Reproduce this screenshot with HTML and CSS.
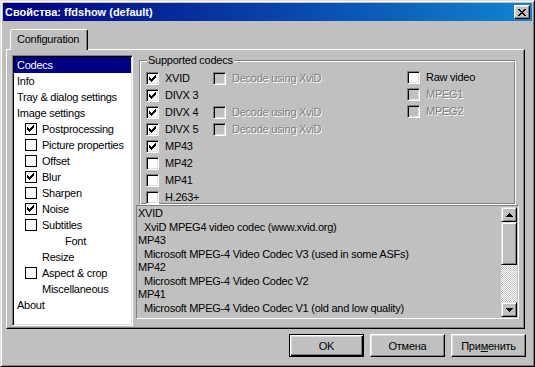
FILE: index.html
```html
<!DOCTYPE html>
<html lang="ru">
<head>
    <meta charset="UTF-8">
    <title>Свойства: ffdshow (default)</title>
    <link rel="stylesheet" href="styles.css">
</head>
<body>
    <svg class="sprites" xmlns="http://www.w3.org/2000/svg">
        <symbol id="tick" viewBox="0 0 11 11">
            <path d="M8 2h1v1h-1z M7 3h2v1h-2z M2 4h1v1h-1z M6 4h3v1h-3z M2 5h2v1h-2z M5 5h3v1h-3z M2 6h5v1h-5z M3 7h3v1h-3z M4 8h1v1h-1z" fill="#000"/>
        </symbol>
    </svg>

    <div class="window">
        <div class="titlebar">
            <span class="title">Свойства: ffdshow (default)</span>
            <button class="close">
                <svg width="8" height="7" viewBox="0 0 8 7"><path d="M0 0h2v1h-2z M6 0h2v1h-2z M1 1h2v1h-2z M5 1h2v1h-2z M2 2h4v1h-4z M3 3h2v1h-2z M2 4h4v1h-4z M1 5h2v1h-2z M5 5h2v1h-2z M0 6h2v1h-2z M6 6h2v1h-2z" fill="#000"/></svg>
            </button>
        </div>

        <div class="tabs">
            <div class="tab">Configuration</div>
        </div>

        <div class="panel">
            <ul class="tree">
                <li class="item sel">Codecs</li>
                <li class="item">Info</li>
                <li class="item">Tray &amp; dialog settings</li>
                <li class="item">Image settings</li>
                <li class="item sub"><span class="box"><svg class="tick"><use href="#tick"/></svg></span>Postprocessing</li>
                <li class="item sub"><span class="box"></span>Picture properties</li>
                <li class="item sub"><span class="box"></span>Offset</li>
                <li class="item sub"><span class="box"><svg class="tick"><use href="#tick"/></svg></span>Blur</li>
                <li class="item sub"><span class="box"></span>Sharpen</li>
                <li class="item sub"><span class="box"><svg class="tick"><use href="#tick"/></svg></span>Noise</li>
                <li class="item sub"><span class="box"></span>Subtitles</li>
                <li class="item leaf2">Font</li>
                <li class="item leaf">Resize</li>
                <li class="item sub"><span class="box"></span>Aspect &amp; crop</li>
                <li class="item leaf">Miscellaneous</li>
                <li class="item">About</li>
            </ul>

            <div class="main">
                <div class="group">
                    <span class="group-title">Supported codecs</span>
                    <div class="col col1">
                        <div class="check"><span class="cb"><svg class="tick"><use href="#tick"/></svg></span>XVID</div>
                        <div class="check"><span class="cb"><svg class="tick"><use href="#tick"/></svg></span>DIVX 3</div>
                        <div class="check"><span class="cb"><svg class="tick"><use href="#tick"/></svg></span>DIVX 4</div>
                        <div class="check"><span class="cb"><svg class="tick"><use href="#tick"/></svg></span>DIVX 5</div>
                        <div class="check"><span class="cb"><svg class="tick"><use href="#tick"/></svg></span>MP43</div>
                        <div class="check"><span class="cb"></span>MP42</div>
                        <div class="check"><span class="cb"></span>MP41</div>
                        <div class="check"><span class="cb"></span>H.263+</div>
                    </div>
                    <div class="col col2">
                        <div class="check"><span class="cb dis"></span><span class="label-dis clip">Decode using XviD</span></div>
                        <div class="check"></div>
                        <div class="check"><span class="cb dis"></span><span class="label-dis clip">Decode using XviD</span></div>
                        <div class="check"><span class="cb dis"></span><span class="label-dis clip">Decode using XviD</span></div>
                    </div>
                    <div class="col col3">
                        <div class="check"><span class="cb"></span>Raw video</div>
                        <div class="check"><span class="cb dis"></span><span class="label-dis">MPEG1</span></div>
                        <div class="check"><span class="cb dis"></span><span class="label-dis">MPEG2</span></div>
                    </div>
                </div>

                <div class="memo">
                    <div class="memo-text">
                        <div>XVID</div>
                        <div class="ind">XviD MPEG4 video codec (www.xvid.org)</div>
                        <div>MP43</div>
                        <div class="ind">Microsoft MPEG-4 Video Codec V3 (used in some ASFs)</div>
                        <div>MP42</div>
                        <div class="ind">Microsoft MPEG-4 Video Codec V2</div>
                        <div>MP41</div>
                        <div class="ind">Microsoft MPEG-4 Video Codec V1 (old and low quality)</div>
                    </div>
                    <div class="scroll">
                        <div class="sb-btn">
                            <svg width="7" height="4" viewBox="0 0 7 4"><path d="M3 0h1v1h-1z M2 1h3v1h-3z M1 2h5v1h-5z M0 3h7v1h-7z" fill="#000"/></svg>
                        </div>
                        <div class="sb-thumb"></div>
                        <div class="sb-track"></div>
                        <div class="sb-btn">
                            <svg width="7" height="4" viewBox="0 0 7 4"><path d="M0 0h7v1h-7z M1 1h5v1h-5z M2 2h3v1h-3z M3 3h1v1h-1z" fill="#000"/></svg>
                        </div>
                    </div>
                </div>
            </div>
        </div>

        <div class="buttons">
            <button class="btn default">OK</button>
            <button class="btn">Отмена</button>
            <button class="btn">При<u>м</u>енить</button>
        </div>
    </div>
</body>
</html>
```

FILE: styles.css
```css
* {
    box-sizing: border-box;
}
body {
    margin: 0;
    font-family: "Liberation Sans", Arial, sans-serif;
    font-size: 11px;
    letter-spacing: -0.25px;
    color: #000;
    background: #c0c0c0;
}
.sprites {
    display: none;
}
.window {
    width: 535px;
    height: 367px;
    background: #c0c0c0;
    border: 1px solid;
    border-color: #dfdfdf #000 #000 #dfdfdf;
    box-shadow: inset 1px 1px #fff, inset -1px -1px #808080;
    padding: 2px;
}
.titlebar {
    height: 18px;
    background: linear-gradient(90deg, #000080, #1084d0);
    display: flex;
    align-items: center;
    justify-content: space-between;
    padding: 0 2px;
}
.title {
    color: #fff;
    font-weight: bold;
    letter-spacing: 0;
}
.close {
    width: 16px;
    height: 14px;
    padding: 0;
    background: #c0c0c0;
    border: 1px solid;
    border-color: #fff #000 #000 #fff;
    box-shadow: inset -1px -1px #808080, inset 1px 1px #dfdfdf;
    display: flex;
    align-items: center;
    justify-content: center;
}
.close svg {
    display: block;
}

/* tab strip */
.tabs {
    display: flex;
    margin: 8px 0 0 7px;
    position: relative;
    z-index: 1;
}
.tab {
    width: 78px;
    height: 21px;
    margin-bottom: -1px;
    padding-left: 6px;
    line-height: 19px;
    background: #c0c0c0;
    border: 1px solid;
    border-bottom: none;
    border-color: #fff #000 transparent #fff;
    border-radius: 2px 2px 0 0;
    box-shadow: inset -1px 0 #808080;
}
.panel {
    display: flex;
    gap: 3px;
    width: 519px;
    height: 280px;
    margin-left: 3px;
    padding: 5px 5px 2px 5px;
    border: 1px solid;
    border-color: #fff #000 #000 #fff;
    box-shadow: inset -1px -1px #808080;
}

/* left tree */
.tree {
    list-style: none;
    margin: 0;
    padding: 1px;
    width: 121px;
    height: 271px;
    flex: none;
    background: #fff;
    border: 1px solid;
    border-color: #808080 #fff #fff #808080;
    box-shadow: inset 1px 1px #000, inset -1px -1px #dfdfdf;
}
.item {
    height: 16px;
    line-height: 16px;
    padding-left: 3px;
    display: flex;
    align-items: center;
    white-space: nowrap;
}
.item.sel {
    background: #000080;
    color: #fff;
}
.item.sub {
    padding-left: 11px;
}
.item.leaf {
    padding-left: 28px;
}
.item.leaf2 {
    padding-left: 51px;
}
.box {
    width: 12px;
    height: 12px;
    flex: none;
    margin-right: 5px;
    border: 1px solid #000;
    background: #fff;
}
.box .tick {
    display: block;
    width: 11px;
    height: 11px;
    margin: -1px 0 0 -1px;
}

/* right side */
.main {
    width: 383px;
    display: flex;
    flex-direction: column;
}
.group {
    position: relative;
    display: flex;
    height: 145px;
    margin: 5px 3px 0;
    padding: 11px 0 0 6px;
    border: 1px solid;
    border-color: #808080 #fff #fff #808080;
    box-shadow: inset 1px 1px #fff, inset -1px -1px #808080;
}
.group-title {
    position: absolute;
    top: -7px;
    left: 7px;
    padding: 0 1px;
    line-height: 13px;
    background: #c0c0c0;
}
.col {
    display: flex;
    flex-direction: column;
    gap: 4px;
}
.col1 {
    width: 67px;
}
.col2 {
    width: 194px;
}
.col3 {
    margin-top: -1px;
}
.check {
    display: flex;
    align-items: center;
    height: 13px;
    line-height: 13px;
    white-space: nowrap;
}
.cb {
    width: 13px;
    height: 13px;
    flex: none;
    margin-right: 6px;
    background: #fff;
    border: 1px solid;
    border-color: #808080 #fff #fff #808080;
    box-shadow: inset 1px 1px #000, inset -1px -1px #dfdfdf;
}
.cb.dis {
    background: #c0c0c0;
}
.cb .tick {
    display: block;
    width: 11px;
    height: 11px;
}
.label-dis {
    color: #808080;
    text-shadow: 1px 1px 0 #fff;
}
.clip {
    width: 90px;
    overflow: hidden;
}

/* description memo */
.memo {
    display: flex;
    height: 114px;
    padding: 1px;
    border: 1px solid;
    border-color: #808080 #fff #fff #808080;
}
.memo-text {
    flex: 1;
    line-height: 13.5px;
    padding-left: 0;
    white-space: nowrap;
    overflow: hidden;
}
.ind {
    padding-left: 6px;
}
.scroll {
    width: 16px;
    display: flex;
    flex-direction: column;
}
.sb-btn,
.sb-thumb {
    background: #c0c0c0;
    border: 1px solid;
    border-color: #dfdfdf #000 #000 #dfdfdf;
    box-shadow: inset 1px 1px #fff, inset -1px -1px #808080;
}
.sb-btn {
    height: 15px;
    display: flex;
    align-items: center;
    justify-content: center;
}
.sb-btn svg {
    display: block;
}
.sb-thumb {
    height: 43px;
}
.sb-track {
    flex: 1;
    background: repeating-conic-gradient(#fff 0 25%, #c0c0c0 0 50%) 0 0 / 2px 2px;
}

/* dialog buttons */
.buttons {
    display: flex;
    justify-content: flex-end;
    gap: 6px;
    margin-top: 5px;
    padding-right: 6px;
}
.btn {
    width: 75px;
    height: 23px;
    padding: 0;
    font: inherit;
    letter-spacing: inherit;
    color: #000;
    background: #c0c0c0;
    border: 1px solid;
    border-color: #fff #000 #000 #fff;
    box-shadow: inset -1px -1px #808080, inset 1px 1px #dfdfdf;
}
.btn.default {
    border-color: #000;
    box-shadow: inset 1px 1px #fff, inset -1px -1px #000, inset -2px -2px #808080, inset 2px 2px #dfdfdf;
}
```
